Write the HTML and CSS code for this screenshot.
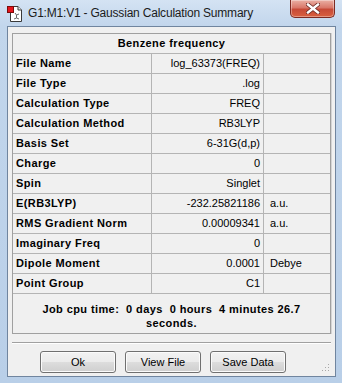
FILE: index.html
```html
<!DOCTYPE html>
<html lang="en">
<head>
    <meta charset="UTF-8">
    <title>G1:M1:V1 - Gaussian Calculation Summary</title>
    <link rel="stylesheet" href="styles.css">
</head>
<body>
    <div class="window">
        <div class="titlebar">
            <svg class="app-icon" width="16" height="17" viewBox="0 0 16 17">
                <path d="M3.5 1.5 H11 L14.5 5 V16.5 H3.5 Z" fill="#fff" stroke="#3a3a3a"/>
                <path d="M11 1.5 V5 H14.5" fill="#e8e8e8" stroke="#3a3a3a"/>
                <path d="M8 8 L9.5 10 L9.5 13 M9.5 10 L12 9 M9.5 13 L7 14 M9.5 13 L12 14" stroke="#6a6a6a" fill="none"/>
                <rect x="0.5" y="1.5" width="6" height="6" fill="#e5141b" stroke="#7a0a0a"/>
            </svg>
            <span class="title">G1:M1:V1 - Gaussian Calculation Summary</span>
            <div class="close">
                <svg width="14" height="11" viewBox="0 0 14 11">
                    <path d="M2 1.5 L12 9.5 M12 1.5 L2 9.5" stroke="#6b2a24" stroke-width="4" stroke-linecap="square"/>
                    <path d="M2 1.5 L12 9.5 M12 1.5 L2 9.5" stroke="#fff" stroke-width="2.4" stroke-linecap="square"/>
                </svg>
            </div>
        </div>

        <div class="client">
            <div class="panel">
                <div class="summary">
                    <div class="head">Benzene frequency</div>

                    <div class="label">File Name</div><div class="value">log_63373(FREQ)</div><div class="unit"></div>
                    <div class="label">File Type</div><div class="value">.log</div><div class="unit"></div>
                    <div class="label">Calculation Type</div><div class="value">FREQ</div><div class="unit"></div>
                    <div class="label">Calculation Method</div><div class="value">RB3LYP</div><div class="unit"></div>
                    <div class="label">Basis Set</div><div class="value">6-31G(d,p)</div><div class="unit"></div>
                    <div class="label">Charge</div><div class="value">0</div><div class="unit"></div>
                    <div class="label">Spin</div><div class="value">Singlet</div><div class="unit"></div>
                    <div class="label">E(RB3LYP)</div><div class="value">-232.25821186</div><div class="unit">a.u.</div>
                    <div class="label">RMS Gradient Norm</div><div class="value">0.00009341</div><div class="unit">a.u.</div>
                    <div class="label">Imaginary Freq</div><div class="value">0</div><div class="unit"></div>
                    <div class="label">Dipole Moment</div><div class="value">0.0001</div><div class="unit">Debye</div>
                    <div class="label">Point Group</div><div class="value">C1</div><div class="unit"></div>
                </div>
                <p class="cpu">Job cpu time:&nbsp; 0 days&nbsp; 0 hours&nbsp; 4 minutes 26.7<br>seconds.</p>
            </div>

            <div class="separator"></div>

            <div class="buttons">
                <button class="btn">Ok</button>
                <button class="btn">View File</button>
                <button class="btn">Save Data</button>
            </div>

            <svg class="grip" width="10" height="10" viewBox="0 0 10 10">
                <rect x="7" y="1" width="1" height="1" fill="#a8a8a8"/>
                <rect x="4" y="4" width="1" height="1" fill="#a8a8a8"/>
                <rect x="7" y="4" width="1" height="1" fill="#a8a8a8"/>
                <rect x="1" y="7" width="1" height="1" fill="#a8a8a8"/>
                <rect x="4" y="7" width="1" height="1" fill="#a8a8a8"/>
                <rect x="7" y="7" width="1" height="1" fill="#a8a8a8"/>
            </svg>
        </div>
    </div>
</body>
</html>
```

FILE: styles.css
```css
* {
    box-sizing: border-box;
}
body {
    margin: 0;
    font-family: "Liberation Sans", Arial, sans-serif;
    font-size: 11px;
    color: #000;
}
.window {
    width: 342px;
    height: 383px;
    display: flex;
    flex-direction: column;
    background: linear-gradient(#d4e3f3, #c2d6ec 26px, #b9cfe8);
}
.titlebar {
    height: 26px;
    display: flex;
    align-items: flex-start;
    padding-left: 7px;
}
.app-icon {
    margin-top: 5px;
    flex: none;
}
.title {
    margin-left: 5px;
    margin-top: 6px;
    font-size: 12px;
    letter-spacing: -0.2px;
    color: #1b1b1b;
    white-space: nowrap;
}
.close {
    margin-left: auto;
    margin-right: 7px;
    width: 45px;
    height: 18px;
    display: flex;
    align-items: center;
    justify-content: center;
    border: 1px solid #7c2a22;
    border-top: none;
    border-radius: 0 0 5px 5px;
    background: linear-gradient(#eab0a4, #d9786a 45%, #c74a37 55%, #d9603f);
    box-shadow: inset 0 0 0 1px rgba(255, 255, 255, 0.35);
}
.client {
    position: relative;
    flex: 1;
    margin: 0 6px 6px 7px;
    border: 1px solid #70859f;
    background: #f0f0f0;
    padding: 6px 4px 0 4px;
}
.panel {
    border: 1px solid #a0a0a0;
    box-shadow: 1px 0 0 #d4d4d4;
}
.summary {
    display: grid;
    grid-template-columns: 139px 112px 1fr;
}
.summary > div {
    line-height: 19px;
    height: 20px;
    border-bottom: 1px solid #b4b4b4;
    white-space: nowrap;
}
.head {
    grid-column: 1 / -1;
    text-align: center;
    font-weight: bold;
    letter-spacing: 0.4px;
}
.label {
    padding-left: 3px;
    font-weight: bold;
    letter-spacing: 0.4px;
    border-right: 1px solid #b4b4b4;
}
.value {
    text-align: right;
    padding-right: 3px;
    border-right: 1px solid #b4b4b4;
}
.unit {
    padding-left: 6px;
}
.cpu {
    margin: 0;
    padding: 8px 0 3px;
    text-align: center;
    font-weight: bold;
    letter-spacing: 0.4px;
    line-height: 14px;
}
.separator {
    margin-top: 8px;
    border-top: 1px solid #a0a0a0;
    border-bottom: 1px solid #fff;
}
.buttons {
    display: flex;
    gap: 9px;
    padding-left: 28px;
    margin-top: 7px;
}
.btn {
    width: 76px;
    height: 22px;
    padding: 0;
    font-family: inherit;
    font-size: 11px;
    color: #000;
    border: 1px solid #707070;
    border-radius: 3px;
    background: linear-gradient(#f2f2f2, #ebebeb 50%, #dddddd 50%, #cfcfcf);
    box-shadow: inset 0 0 0 1px #fbfbfb;
}
.grip {
    position: absolute;
    right: 4px;
    bottom: 3px;
}
```
